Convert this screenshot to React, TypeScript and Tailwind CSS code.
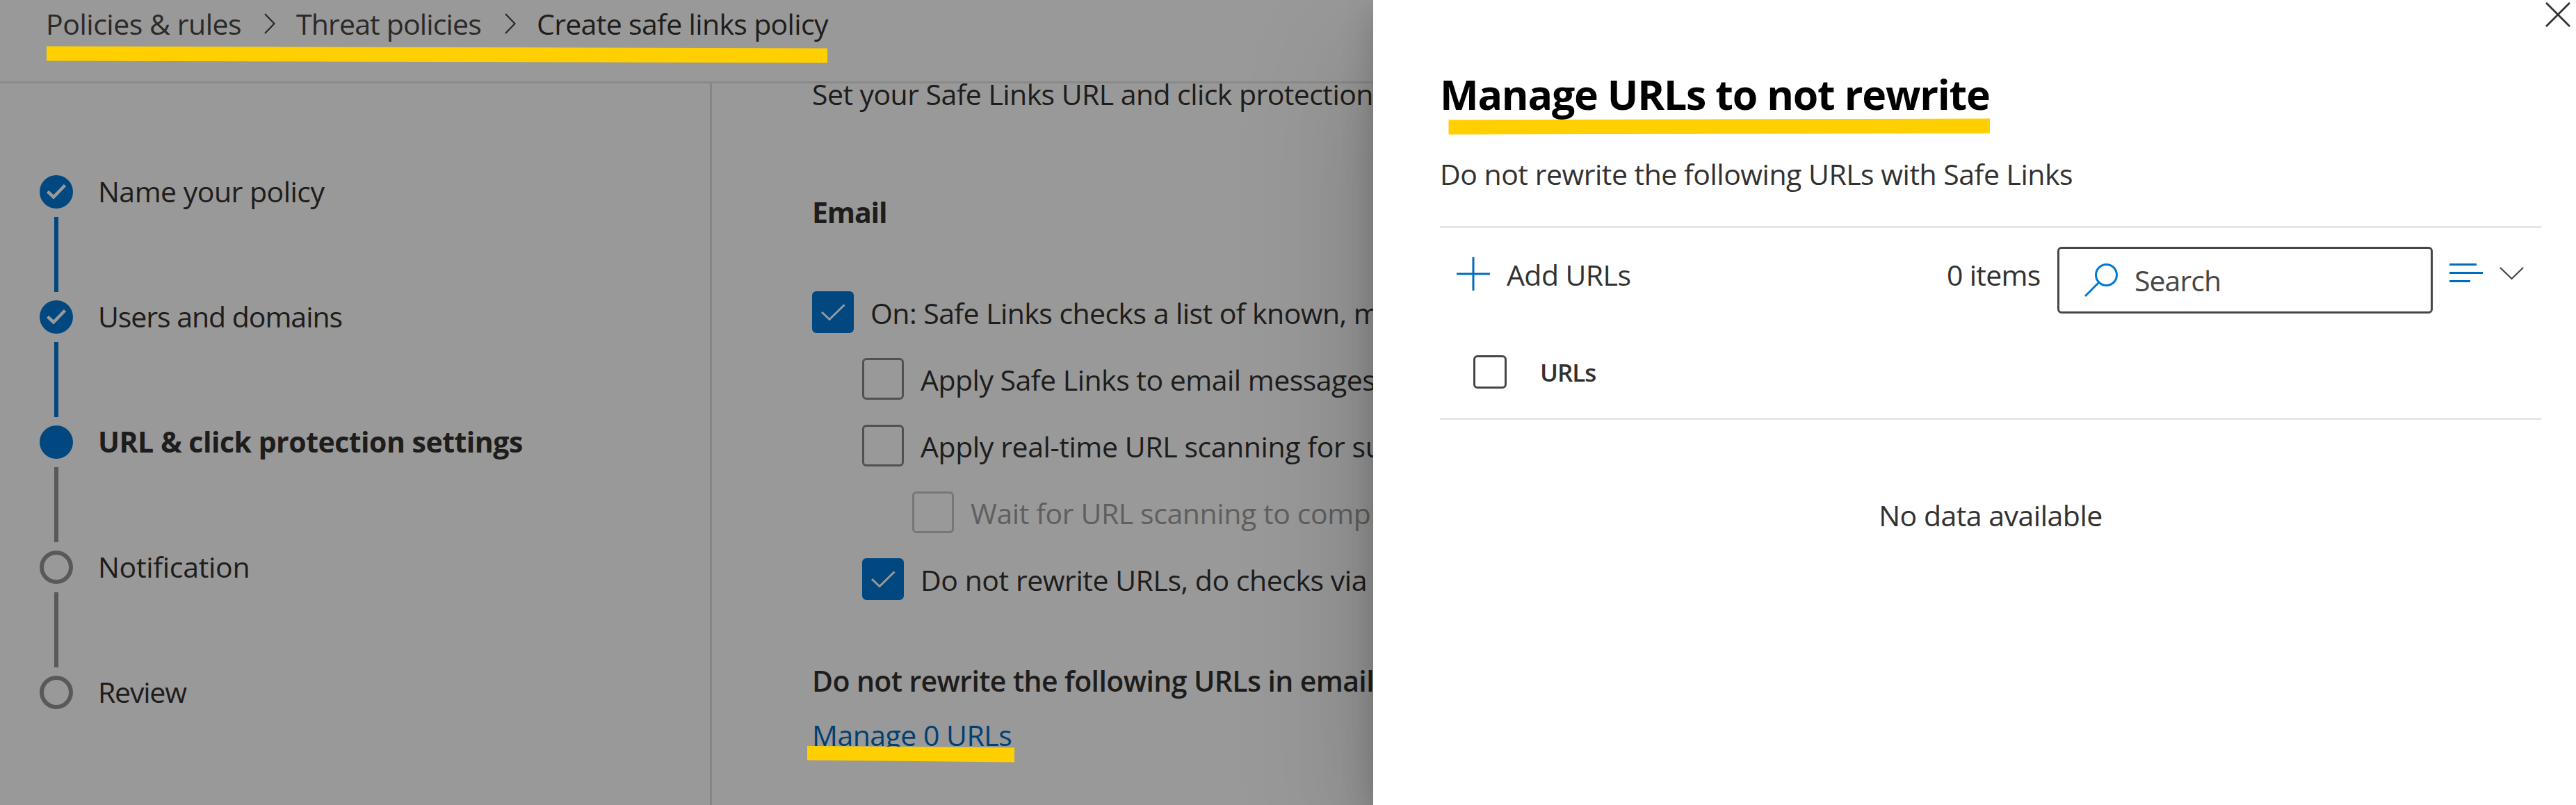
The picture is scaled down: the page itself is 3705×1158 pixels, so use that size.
import type { ReactNode } from "react";
import clsx from "clsx";

type StepState = "done" | "current" | "pending";

const steps: { label: string; state: StepState; className: string }[] = [
  { label: "Name your policy", state: "done", className: "tracking-[-0.51px]" },
  { label: "Users and domains", state: "done", className: "tracking-[-1.03px]" },
  { label: "URL & click protection settings", state: "current", className: "font-bold tracking-[-0.49px]" },
  { label: "Notification", state: "pending", className: "tracking-[-0.3px]" },
  { label: "Review", state: "pending", className: "tracking-[-1.2px]" },
];

function Crumb({ className, children }: { className?: string; children: ReactNode }) {
  return <span className={clsx("shrink-0 whitespace-nowrap", className)}>{children}</span>;
}

function CrumbChevron() {
  return (
    <svg width="16" height="30" viewBox="0 0 16 30" fill="none" stroke="#444" strokeWidth="2.2" className="shrink-0">
      <path d="M1 1 L14.5 15 L1 29" />
    </svg>
  );
}

function StepMarker({ state }: { state: StepState }) {
  if (state === "pending") {
    return <span className="h-12 w-12 shrink-0 rounded-full border-[6px] border-[#979593]" />;
  }
  return (
    <span className="h-12 w-12 shrink-0 rounded-full bg-[#0078d4]">
      {state === "done" && (
        <svg width="48" height="48" viewBox="0 0 48 48" fill="none" stroke="#fff" strokeWidth="4.5">
          <path d="M11.5 23.5 L20 31.5 L36.5 14.5" />
        </svg>
      )}
    </span>
  );
}

function Stepper() {
  return (
    <nav className="w-[1024px] shrink-0 border-r-[3px] border-[#e1dfdd] pt-[132px] pl-[57px]">
      {steps.map((step, i) => (
        <div key={step.label}>
          <div className="flex h-12 items-center gap-[36px]">
            <StepMarker state={step.state} />
            <span className={clsx("-mt-0.5 whitespace-nowrap", step.className)}>{step.label}</span>
          </div>
          {i < steps.length - 1 && (
            <div className={clsx("my-3 ml-[21px] h-[108px] w-1.5", step.state === "done" ? "bg-[#0078d4]" : "bg-[#979593]")} />
          )}
        </div>
      ))}
    </nav>
  );
}

interface OptionProps {
  label: string;
  checked?: boolean;
  disabled?: boolean;
  className?: string;
  labelClassName: string;
}

function Option({ label, checked, disabled, className, labelClassName }: OptionProps) {
  return (
    <label className={clsx("flex h-[60px] items-center gap-6", className)}>
      <span
        className={clsx(
          "h-[60px] w-[60px] shrink-0 rounded-md",
          checked ? "bg-[#0078d4]" : "border-[3px]",
          !checked && (disabled ? "border-[#c8c6c4]" : "border-[#8a8886]")
        )}
      >
        {checked && (
          <svg width="60" height="60" viewBox="0 0 60 60" fill="none" stroke="#fff" strokeWidth="3">
            <path d="M14 30 L25 40.5 L46.5 19.5" />
          </svg>
        )}
      </span>
      <span className={clsx("mt-0.5 whitespace-nowrap", disabled && "text-[#a19f9d]", labelClassName)}>{label}</span>
    </label>
  );
}

function PolicySettings() {
  return (
    <main className="w-[951px] shrink-0 pl-36 whitespace-nowrap">
      <p className="-mt-[15px] tracking-[-0.56px]">Set your Safe Links URL and click protection</p>
      <h2 className="mt-[110px] font-bold tracking-[-1.15px]">Email</h2>
      <div className="mt-[84px] flex flex-col gap-9">
        <Option checked label="On: Safe Links checks a list of known, malicious" labelClassName="tracking-[-0.56px]" />
        <Option className="ml-[72px]" label="Apply Safe Links to email messages" labelClassName="tracking-[-0.51px]" />
        <Option className="ml-[72px]" label="Apply real-time URL scanning for suspicious" labelClassName="tracking-[-0.41px]" />
        <Option disabled className="ml-36" label="Wait for URL scanning to complete" labelClassName="tracking-[-0.41px]" />
        <Option checked className="ml-[72px]" label="Do not rewrite URLs, do checks via" labelClassName="tracking-[-0.46px]" />
      </div>
      <h3 className="mt-[86px] font-semibold tracking-[-0.61px]">Do not rewrite the following URLs in email</h3>
      <a className="mt-[18px] block tracking-[-0.5px] text-[#006cbe]">Manage 0 URLs</a>
    </main>
  );
}

function UrlPanel() {
  return (
    <aside className="absolute inset-y-0 right-0 w-[1730px] bg-white text-[#323130] shadow-[0_77px_173px_rgba(0,0,0,0.22),0_14px_43px_rgba(0,0,0,0.18)]">
      <div className="flex justify-end pt-[3px] pr-2">
        <svg width="36" height="36" viewBox="0 0 36 36" fill="none" stroke="#333" strokeWidth="2.8">
          <path d="M1 1 L35 35 M35 1 L1 35" />
        </svg>
      </div>

      <div className="pr-[50px] pl-24">
        <h1 className="mt-14 text-[59px] leading-[80px] font-bold tracking-[-1.2px] text-black">
          Manage URLs to not rewrite
        </h1>
        <p className="mt-[45px] tracking-[-0.5px]">Do not rewrite the following URLs with Safe Links</p>

        <div className="mt-[45px] flex items-start border-t-[3px] border-[#e6e6e6] pt-[27px] pr-[25px]">
          <button className="mt-[15px] ml-6 flex h-12 items-center gap-6">
            <svg width="48" height="48" viewBox="0 0 48 48" stroke="#006cbe" strokeWidth="3">
              <path d="M24 0 V48 M0 24 H48" />
            </svg>
            <span className="mt-0.5 tracking-[-0.56px]">Add URLs</span>
          </button>
          <span className="mt-2.5 ml-auto w-[159px] tracking-[-0.71px]">0 items</span>
          <div className="flex h-24 w-[540px] items-center gap-6 rounded-md border-[3px] border-[#484644] pl-9">
            <svg width="48" height="48" viewBox="0 0 48 48" fill="none" stroke="#0078d4" strokeWidth="3">
              <circle cx="31.5" cy="16.5" r="15" />
              <path d="M21 27 L1 47" />
            </svg>
            <span className="tracking-[-0.95px] text-[#484644]">Search</span>
          </div>
          <svg width="48" height="27" viewBox="0 0 48 27" stroke="#006cbe" strokeWidth="3" className="mt-6 ml-6">
            <path d="M0 1.5 H39 M0 13.5 H48 M0 25.5 H30" />
          </svg>
          <svg width="35" height="19" viewBox="0 0 35 19" fill="none" stroke="#484644" strokeWidth="2.2" className="mt-[29px] ml-6">
            <path d="M1 1 L17.5 17 L34 1" />
          </svg>
        </div>

        <div className="mt-[60px] flex h-[93px] items-start gap-12 border-b-[3px] border-[#e6e6e6] pl-12">
          <span className="h-12 w-12 rounded-md border-[3px] border-[#484644]" />
          <span className="mt-px text-[35px] leading-[48px] font-semibold tracking-[-1px]">URLs</span>
        </div>
        <p className="mt-[107px] text-center tracking-[-0.5px]">No data available</p>
      </div>
    </aside>
  );
}

// Marker strokes drawn over the page
function Highlights() {
  return (
    <svg width="3705" height="1158" viewBox="0 0 3705 1158" fill="#ffcf00" className="absolute inset-0">
      <polygon points="67,66.5 1190,69.5 1190,90.5 67,87.5" />
      <polygon points="1161,1073 1459,1075.5 1459,1096.5 1161,1093.5" />
      <polygon points="2083.5,172.5 2862,170.5 2862,191.7 2083.5,193.5" />
    </svg>
  );
}

export default function App() {
  return (
    <div className="relative h-[1158px] w-[3705px] overflow-hidden bg-white font-['Open_Sans','Noto_Sans',sans-serif] text-[41px] leading-[60px] text-[#323130]">
      <header className="h-[120px] border-b-[3px] border-[#e6e6e6] pt-1 pl-[66px]">
        <div className="flex items-center">
          <Crumb className="w-[314px] tracking-[-0.46px] text-[#484644]">Policies & rules</Crumb>
          <CrumbChevron />
          <Crumb className="ml-[30px] w-[300px] tracking-[-0.84px] text-[#484644]">Threat policies</Crumb>
          <CrumbChevron />
          <Crumb className="ml-[30px] tracking-[-0.66px]">Create safe links policy</Crumb>
        </div>
      </header>
      <div className="flex h-[1038px]">
        <Stepper />
        <PolicySettings />
      </div>
      <div className="absolute inset-0 bg-black/40" />
      <UrlPanel />
      <Highlights />
    </div>
  );
}
